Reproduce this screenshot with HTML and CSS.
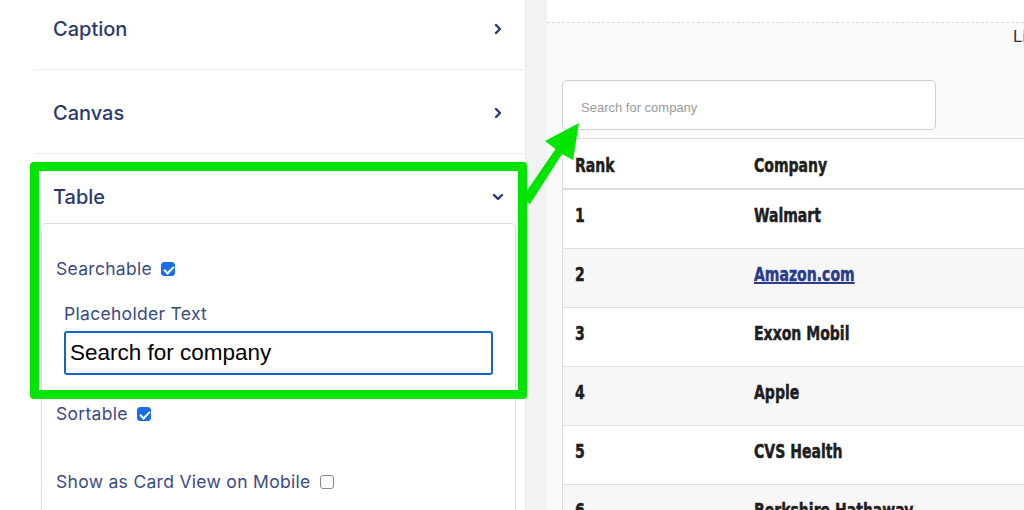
FILE: index.html
```html
<!DOCTYPE html>
<html lang="en">
<head>
<meta charset="utf-8">
<title>Table settings</title>
<link rel="stylesheet" href="styles.css">
</head>
<body>
<div class="app">
  <aside class="sidebar">
    <div class="acc-list">
      <div class="acc-head">
        <span>Caption</span>
        <svg class="chev" width="10" height="12" viewBox="0 0 10 12"><path d="M3 2 L7 6 L3 10" fill="none" stroke="#2b3a6e" stroke-width="2.4" stroke-linecap="round" stroke-linejoin="round"/></svg>
      </div>
      <div class="acc-head">
        <span>Canvas</span>
        <svg class="chev" width="10" height="12" viewBox="0 0 10 12"><path d="M3 2 L7 6 L3 10" fill="none" stroke="#2b3a6e" stroke-width="2.4" stroke-linecap="round" stroke-linejoin="round"/></svg>
      </div>
      <div class="acc-section">
        <div class="acc-head open">
          <span>Table</span>
          <svg class="chev-down" width="12" height="10" viewBox="0 0 12 10"><path d="M2 3 L6 7 L10 3" fill="none" stroke="#2b3a6e" stroke-width="2.4" stroke-linecap="round" stroke-linejoin="round"/></svg>
        </div>
        <div class="card">
          <label class="check-row">Searchable <input class="cb" type="checkbox" checked></label>
          <div class="field">
            <div class="field-label">Placeholder Text</div>
            <input class="text-input" type="text" value="Search for company">
          </div>
          <label class="check-row sortable">Sortable <input class="cb" type="checkbox" checked></label>
          <label class="check-row cardview">Show as Card View on Mobile <input class="cb" type="checkbox"></label>
        </div>
      </div>
    </div>
  </aside>
  <div class="gutter"></div>
  <main class="preview">
    <div class="preview-top"></div>
    <div class="preview-bar">Live Preview</div>
    <div class="search-wrap">
      <input class="search" type="text" placeholder="Search for company">
    </div>
    <table class="data">
      <thead>
        <tr><th class="rank"><span class="t">Rank</span></th><th><span class="t">Company</span></th></tr>
      </thead>
      <tbody>
        <tr><td class="rank"><span class="t">1</span></td><td><span class="t">Walmart</span></td></tr>
        <tr><td class="rank"><span class="t">2</span></td><td><a class="t" href="#">Amazon.com</a></td></tr>
        <tr><td class="rank"><span class="t">3</span></td><td><span class="t">Exxon Mobil</span></td></tr>
        <tr><td class="rank"><span class="t">4</span></td><td><span class="t">Apple</span></td></tr>
        <tr><td class="rank"><span class="t">5</span></td><td><span class="t">CVS Health</span></td></tr>
        <tr><td class="rank"><span class="t">6</span></td><td><span class="t">Berkshire Hathaway</span></td></tr>
      </tbody>
    </table>
  </main>
  <div class="highlight"></div>
  <svg class="arrow" width="1024" height="510" viewBox="0 0 1024 510">
    <polygon points="579,123 545,141 555.5,149 522,198 530,204 562,154 573,160" fill="#00e400"/>
  </svg>
</div>
</body>
</html>
```
FILE: styles.css
```css
* { box-sizing: border-box; }
html, body { margin: 0; padding: 0; }
body {
  width: 1024px;
  height: 510px;
  overflow: hidden;
  background: #fff;
  font-family: Inter, "Noto Sans", sans-serif;
}
.app {
  position: relative;
  display: flex;
  width: 1024px;
  height: 510px;
  overflow: hidden;
}
.sidebar {
  width: 525px;
  flex: none;
  background: #fff;
  overflow: hidden;
}
.acc-list {
  margin: -14px 0 0 35px;
  width: 489px;
}
.acc-head {
  display: flex;
  align-items: center;
  justify-content: space-between;
  height: 84px;
  padding: 2px 21px 0 18px;
  border-bottom: 1px solid #ececec;
  color: #2b3a6e;
  font-size: 20px;
  font-weight: 500;
}
.acc-head.open {
  height: 69px;
  align-items: flex-start;
  padding-top: 31px;
  border-bottom: none;
}
.chev { margin-top: 1px; }
.chev-down { margin-top: 7px; margin-right: -1px; }
.card {
  margin: 0 8px 0 6px;
  border: 1px solid #dcdcdc;
  border-bottom: none;
  border-radius: 5px 5px 0 0;
  padding: 33px 22px 40px 14px;
  height: 320px;
}
.check-row {
  display: flex;
  align-items: center;
  height: 24px;
  line-height: 24px;
  color: #3b4a82;
  font-size: 17.5px;
  letter-spacing: 0.3px;
}
.cb {
  -webkit-appearance: none;
  appearance: none;
  position: relative;
  margin: 0 0 0 9px;
  width: 14px;
  height: 14px;
  border: 1px solid #8a8a8a;
  border-radius: 3px;
  background: #fff;
}
.cb:checked {
  border-color: #1b6fe6;
  background: #1b6fe6;
}
.cb:checked::after {
  content: "";
  position: absolute;
  left: 4px;
  top: 1px;
  width: 4px;
  height: 8px;
  border: solid #fff;
  border-width: 0 2px 2px 0;
  transform: rotate(45deg);
}
.field {
  margin-top: 21px;
  padding-left: 8px;
}
.field-label {
  height: 24px;
  line-height: 24px;
  color: #3b4a82;
  font-size: 17.5px;
  letter-spacing: 0.3px;
}
.text-input {
  display: block;
  margin-top: 5px;
  width: 429px;
  height: 44px;
  border: 2px solid #1565c9;
  border-radius: 3px;
  padding: 0 4px;
  font-family: "Liberation Sans", Arial, sans-serif;
  font-size: 22.5px;
  color: #000;
  outline: none;
}
.sortable { margin-top: 27px; }
.cardview { margin-top: 44px; }

.gutter {
  width: 22px;
  flex: none;
  background: #f2f2f2;
  border-left: 1px solid #e9e9e9;
}
.preview {
  flex: 1;
  min-width: 0;
  background: #fafafa;
  overflow: hidden;
}
.preview-top {
  height: 23px;
  background: #fff;
  border-bottom: 1px dashed #d9d9d9;
}
.preview-bar {
  height: 28px;
  line-height: 28px;
  padding-left: 466px;
  white-space: nowrap;
  font-family: "Liberation Sans", Arial, sans-serif;
  font-size: 17px;
  color: #333;
}
.search-wrap {
  margin-top: 29px;
  padding-left: 15px;
}
.search {
  display: block;
  width: 374px;
  height: 50px;
  border: 1px solid #cfcfcf;
  border-radius: 5px;
  background: #fff;
  padding: 5px 0 0 18px;
  font-family: "Liberation Sans", Arial, sans-serif;
  font-size: 13px;
  outline: none;
}
.search::placeholder { color: #9a9a9a; }
.data {
  margin: 8px 0 0 15px;
  width: 640px;
  border-collapse: separate;
  border-spacing: 0;
  background: #fff;
  border-top: 1px solid #dcdcdc;
  border-left: 1px solid #dcdcdc;
  font-family: "DejaVu Sans Condensed", "DejaVu Sans", sans-serif;
  font-weight: bold;
  font-size: 20px;
  color: #1e1e1e;
  text-align: left;
  white-space: nowrap;
}
.data .t {
  display: inline-block;
  transform: scaleX(0.78);
  transform-origin: left center;
  -webkit-text-stroke: 0.5px currentColor;
}
.data th {
  padding: 15px 12px 12px;
  line-height: 22px;
  border-bottom: 2px solid #dcdcdc;
  text-align: left;
}
.data td {
  padding: 14px 12px 22px;
  line-height: 22px;
  border-bottom: 1px solid #dedede;
}
.data .rank { width: 179px; }
.data tbody tr:nth-child(even) td { background: #f7f7f7; }
.data a { color: #2a3c8c; text-decoration: underline; }

.highlight {
  position: absolute;
  left: 30px;
  top: 162px;
  width: 497px;
  height: 237px;
  border: 9px solid #00e400;
  border-radius: 4px;
  pointer-events: none;
}
.arrow {
  position: absolute;
  left: 0;
  top: 0;
  pointer-events: none;
}
```
